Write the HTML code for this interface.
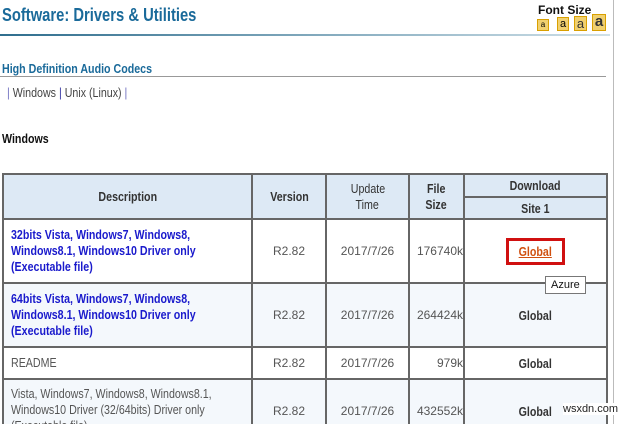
<html style="overflow:hidden"><head><style>
html,body{margin:0;width:621px;height:424px;overflow:hidden}
body{background:#fff;font-family:"Liberation Sans",sans-serif;position:relative}
.a{position:absolute}
.n{display:inline-block;transform:scaleX(.82);white-space:nowrap}
.l{transform-origin:0 0}
table{position:absolute;left:2px;top:173px;border-collapse:collapse;table-layout:fixed;width:604px;font-size:12px;color:#555}
td{border:2px solid #666;text-align:center;padding:0;overflow:visible;white-space:nowrap}
th{border:2px solid #666;background:#dde9f5;color:#333;font-size:13px;padding:0;white-space:nowrap}
.d{text-align:left;padding-left:7px;line-height:16px}
.b{color:#1a1acc;font-weight:bold}
</style></head><body>
<div class="a" style="left:2px;top:5px;font-size:18px;font-weight:bold;color:#1a6a9a"><span class="n l">Software: Drivers &amp; Utilities</span></div>
<div class="a" style="left:0;top:34px;width:610px;height:2px;background:linear-gradient(90deg,#2f6e8e,#cfe0e8)"></div>
<div class="a" style="left:538px;top:3px;font-size:12px;font-weight:bold;color:#111">Font Size</div>
<div class="a" style="left:537px;top:19px;width:10px;height:10px;background:#f0d070;border:1px solid #d9a000;font-size:8px;line-height:10px;text-align:center">a</div>
<div class="a" style="left:557px;top:17px;width:10px;height:12px;background:#f0d070;border:1px solid #d9a000;font-size:11px;line-height:12px;text-align:center">a</div>
<div class="a" style="left:574px;top:16px;width:11px;height:13px;background:#f0d070;border:1px solid #d9a000;font-size:13px;line-height:13px;text-align:center;color:#333">a</div>
<div class="a" style="left:592px;top:14px;width:12px;height:15px;background:#f0d070;border:1px solid #d9a000;font-size:15px;line-height:14px;text-align:center;color:#333;font-weight:bold">a</div>
<div class="a" style="left:613px;top:0;width:1px;height:424px;background:#bbb"></div>
<div class="a" style="left:2px;top:61px;font-size:13px;font-weight:bold;color:#1a6a9a"><span class="n l">High Definition Audio Codecs</span></div>
<div class="a" style="left:0;top:76px;width:606px;height:1px;background:#999"></div>
<div class="a" style="left:7px;top:85px;font-size:13px;color:#444"><span class="n l"><span style="color:#7070c0">|</span> Windows <span style="color:#3030a0">|</span> Unix (Linux) <span style="color:#7070c0">|</span></span></div>
<div class="a" style="left:2px;top:131px;font-size:13px;font-weight:bold;color:#111"><span class="n l">Windows</span></div>
<table>
<colgroup><col style="width:249px"><col style="width:74px"><col style="width:83px"><col style="width:55px"><col style="width:143px"></colgroup>
<tr style="height:23px"><th rowspan="2"><span class="n">Description</span></th><th rowspan="2"><span class="n">Version</span></th><th rowspan="2" style="font-weight:normal;line-height:16px"><span class="n">Update</span><br><span class="n">Time</span></th><th rowspan="2" style="line-height:16px"><span class="n">File</span><br><span class="n">Size</span></th><th><span class="n">Download</span></th></tr>
<tr style="height:22px"><th><span class="n">Site 1</span></th></tr>
<tr style="height:64px"><td class="d b" style="font-size:13px"><span class="n l">32bits Vista, Windows7, Windows8,</span><br><span class="n l">Windows8.1, Windows10 Driver only</span><br><span class="n l">(Executable file)</span></td><td>R2.82</td><td>2017/7/26</td><td style="text-align:right">176740k</td><td><span style="display:inline-block;border:3px solid #d01010;padding:3px 6px;color:#d05010;font-weight:bold;font-size:13px"><span class="n" style="text-decoration:underline">Global</span></span></td></tr>
<tr style="height:64px;background:#f4f8fc"><td class="d b" style="font-size:13px"><span class="n l">64bits Vista, Windows7, Windows8,</span><br><span class="n l">Windows8.1, Windows10 Driver only</span><br><span class="n l">(Executable file)</span></td><td>R2.82</td><td>2017/7/26</td><td style="text-align:right">264424k</td><td style="font-weight:bold;color:#333;font-size:13px"><span class="n">Global</span></td></tr>
<tr style="height:32px"><td class="d" style="font-size:13px"><span class="n l">README</span></td><td>R2.82</td><td>2017/7/26</td><td style="text-align:right">979k</td><td style="font-weight:bold;color:#333;font-size:13px"><span class="n">Global</span></td></tr>
<tr style="height:64px;background:#f4f8fc"><td class="d" style="vertical-align:top;padding-top:6px;font-size:13px"><span class="n l">Vista, Windows7, Windows8, Windows8.1,</span><br><span class="n l">Windows10 Driver (32/64bits) Driver only</span><br><span class="n l">(Executable file)</span></td><td>R2.82</td><td>2017/7/26</td><td style="text-align:right">432552k</td><td style="font-weight:bold;color:#333;font-size:13px"><span class="n">Global</span></td></tr>
</table>
<div class="a" style="left:545px;top:276px;padding:2px 5px;border:1px solid #777;background:#fff;font-size:11px;color:#111">Azure</div>
<div class="a" style="left:563px;top:403px;font-size:11px;color:#222;background:#fff">wsxdn.com</div>
</body></html>
